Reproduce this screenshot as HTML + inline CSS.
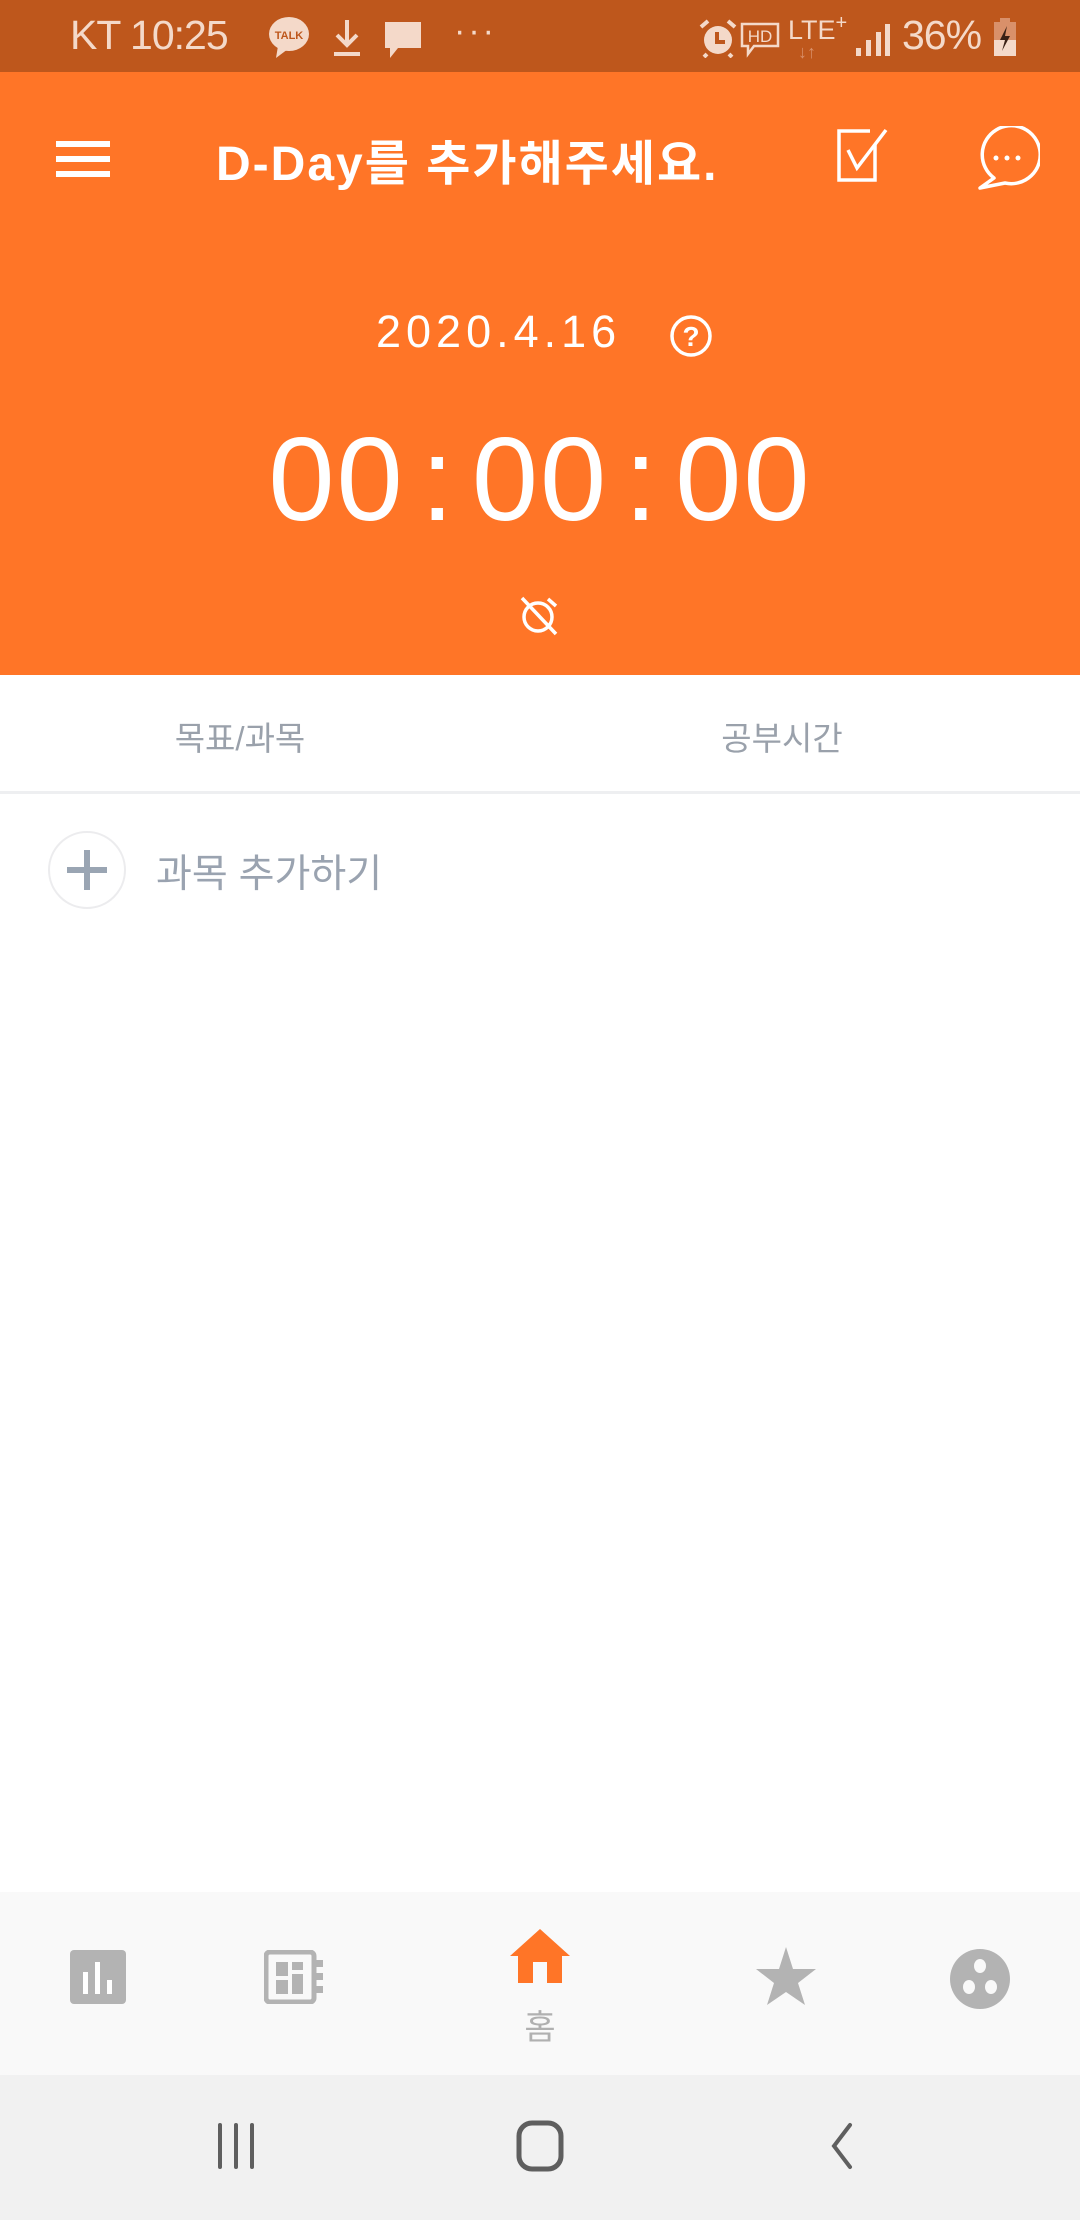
<!DOCTYPE html>
<html><head><meta charset="utf-8"><style>
*{margin:0;padding:0;box-sizing:border-box}
body{width:1080px;height:2220px;position:relative;background:#fff;font-family:"Liberation Sans","Noto Sans CJK KR",sans-serif;overflow:hidden}
.a{position:absolute}
.c{display:inline-block;margin:0 16px}
</style></head><body>
<div class="a" style="left:0;top:0;width:1080px;height:72px;background:#BE571C"></div>
<div class="a" style="left:70px;top:12px;font-size:41px;color:#f4d9c9;letter-spacing:-1px">KT 10:25</div>
<svg class="a" style="left:268px;top:16px" width="44" height="44" viewBox="0 0 44 44"><ellipse cx="21" cy="18" rx="20" ry="17" fill="#f4d9c9"/><path d="M10 30 L8 42 L20 33Z" fill="#f4d9c9"/><text x="21" y="23" font-size="11" font-family="Liberation Sans" font-weight="bold" fill="#BE571C" text-anchor="middle">TALK</text></svg>
<svg class="a" style="left:330px;top:18px" width="34" height="40" viewBox="0 0 34 40"><path d="M17 2 V26 M7 17 L17 27 L27 17 M4 36 H30" stroke="#f4d9c9" stroke-width="4" fill="none"/></svg>
<svg class="a" style="left:382px;top:20px" width="42" height="40" viewBox="0 0 42 40"><path d="M3 2 H39 V28 H16 L8 38 V28 H3Z" fill="#f4d9c9"/></svg>
<div class="a" style="left:454px;top:12px;font-size:34px;color:#f4d9c9;letter-spacing:3px">···</div>
<svg class="a" style="left:698px;top:18px" width="40" height="40" viewBox="0 0 40 40"><circle cx="20" cy="22" r="14" fill="#f4d9c9"/><path d="M3 9 L10 3 M37 9 L30 3 M9 36 L6 39 M31 36 L34 39" stroke="#f4d9c9" stroke-width="4"/><path d="M19 14 V24 H27" stroke="#BE571C" stroke-width="4" fill="none"/></svg>
<svg class="a" style="left:740px;top:22px" width="42" height="36" viewBox="0 0 42 36"><path d="M2 2 H38 V24 H14 L8 32 V24 H2Z" stroke="#f4d9c9" stroke-width="2.5" fill="none"/><text x="20" y="20" font-size="17" font-family="Liberation Sans" fill="#f4d9c9" text-anchor="middle">HD</text></svg>
<div class="a" style="left:788px;top:12px;font-size:27px;color:#f4d9c9">LTE<sup style="font-size:20px">+</sup></div>
<div class="a" style="left:798px;top:42px;font-size:18px;color:#d9906a">↓↑</div>
<svg class="a" style="left:855px;top:22px" width="36" height="34" viewBox="0 0 36 34"><rect x="1" y="26" width="5" height="8" fill="#f4d9c9"/><rect x="11" y="18" width="5" height="16" fill="#f4d9c9"/><rect x="21" y="10" width="5" height="24" fill="#f4d9c9"/><rect x="30" y="2" width="5" height="32" fill="#f4d9c9"/></svg>
<div class="a" style="left:902px;top:12px;font-size:41px;color:#f4d9c9;letter-spacing:-1px">36%</div>
<svg class="a" style="left:994px;top:18px" width="22" height="38" viewBox="0 0 22 38"><rect x="6" y="0" width="10" height="4" fill="#d9906a"/><rect x="0" y="4" width="22" height="34" fill="#d9906a"/><rect x="0" y="22" width="22" height="16" fill="#f4d9c9"/><path d="M13 8 L6 22 H11 L8 33 L16 18 H11Z" fill="#3a2015"/></svg>

<div class="a" style="left:0;top:72px;width:1080px;height:603px;background:#FF7527"></div>
<svg class="a" style="left:56px;top:140px" width="56" height="40" viewBox="0 0 56 40"><path d="M0 4 H54 M0 19 H54 M0 34 H54" stroke="#fff" stroke-width="6"/></svg>
<div class="a" style="left:216px;top:124px;font-size:48px;font-weight:bold;color:#fff;letter-spacing:2px">D-Day를 추가해주세요.</div>
<svg class="a" style="left:836px;top:128px" width="56" height="56" viewBox="0 0 56 56"><path d="M39 16 V52 H3 V3 H34" stroke="#fff" stroke-width="3.5" fill="none"/><path d="M12 22 L21 40 L50 2" stroke="#fff" stroke-width="3.5" fill="none"/></svg>
<svg class="a" style="left:974px;top:126px" width="66" height="66" viewBox="0 0 66 66"><path d="M20 52 A29 29 0 1 1 31 57 L6 62 Z" stroke="#fff" stroke-width="3.5" fill="none" stroke-linejoin="round"/><circle cx="22" cy="32" r="2.5" fill="#fff"/><circle cx="33" cy="32" r="2.5" fill="#fff"/><circle cx="44" cy="32" r="2.5" fill="#fff"/></svg>
<div class="a" style="left:376px;top:306px;font-size:45px;color:#fff;letter-spacing:5px">2020.4.16</div>
<svg class="a" style="left:669px;top:314px" width="44" height="44" viewBox="0 0 44 44"><circle cx="22" cy="22" r="19" stroke="#fff" stroke-width="3.5" fill="none"/><text x="22" y="32" font-size="28" font-family="Liberation Sans" font-weight="bold" fill="#fff" text-anchor="middle">?</text></svg>
<div class="a" style="left:0;top:410px;width:1080px;text-align:center;font-size:119px;color:#fff;letter-spacing:2px;line-height:140px">00<span class="c">:</span>00<span class="c">:</span>00</div>
<svg class="a" style="left:518px;top:594px" width="42" height="42" viewBox="0 0 42 42"><circle cx="20" cy="23" r="14" stroke="#fff" stroke-width="3.5" fill="none"/><path d="M4 4 L38 40 M30 5 L38 12" stroke="#fff" stroke-width="3.5"/></svg>

<div class="a" style="left:0;top:712px;width:480px;text-align:center;font-size:33px;color:#9aa1ab">목표/과목</div>
<div class="a" style="left:540px;top:712px;width:484px;text-align:center;font-size:33px;color:#9aa1ab">공부시간</div>
<div class="a" style="left:0;top:791px;width:1080px;height:3px;background:#eeeff1"></div>
<div class="a" style="left:48px;top:831px;width:78px;height:78px;border-radius:50%;border:2px solid #ececee"></div>
<svg class="a" style="left:65px;top:848px" width="44" height="44" viewBox="0 0 44 44"><path d="M22 2 V42 M2 22 H42" stroke="#9aa5b3" stroke-width="6"/></svg>
<div class="a" style="left:156px;top:843px;font-size:39px;color:#9aa3b0">과목 추가하기</div>

<div class="a" style="left:0;top:1892px;width:1080px;height:183px;background:#f9f9f9"></div>
<svg class="a" style="left:70px;top:1950px" width="56" height="54" viewBox="0 0 56 54"><rect x="0" y="0" width="56" height="54" rx="4" fill="#b3b3b3"/><rect x="13" y="22" width="5" height="22" fill="#fff"/><rect x="25" y="12" width="5" height="32" fill="#fff"/><rect x="37" y="30" width="5" height="14" fill="#fff"/></svg>
<svg class="a" style="left:264px;top:1950px" width="62" height="54" viewBox="0 0 62 54"><rect x="2" y="2" width="48" height="50" rx="4" stroke="#b3b3b3" stroke-width="5" fill="none"/><rect x="12" y="12" width="12" height="14" fill="#b3b3b3"/><rect x="12" y="30" width="12" height="14" fill="#b3b3b3"/><rect x="28" y="12" width="11" height="8" fill="#b3b3b3"/><rect x="28" y="24" width="11" height="20" fill="#b3b3b3"/><rect x="52" y="10" width="7" height="7" fill="#b3b3b3"/><rect x="52" y="23" width="7" height="7" fill="#b3b3b3"/><rect x="52" y="36" width="7" height="7" fill="#b3b3b3"/></svg>
<svg class="a" style="left:510px;top:1929px" width="60" height="54" viewBox="0 0 60 54"><path d="M30 0 L60 27 H52 V54 H8 V27 H0Z" fill="#FF7527"/><rect x="23" y="33" width="14" height="21" fill="#f9f9f9"/></svg>
<div class="a" style="left:500px;top:2000px;width:80px;text-align:center;font-size:34px;color:#b0b0b0">홈</div>
<svg class="a" style="left:756px;top:1947px" width="60" height="58" viewBox="0 0 60 58"><path d="M30 0 L37 22 L60 22 L42 36 L49 58 L30 45 L11 58 L18 36 L0 22 L23 22Z" fill="#b3b3b3"/></svg>
<svg class="a" style="left:949px;top:1948px" width="62" height="62" viewBox="0 0 62 62"><circle cx="31" cy="31" r="30" fill="#b3b3b3"/><ellipse cx="31" cy="18" rx="6" ry="7" fill="#f9f9f9"/><ellipse cx="20" cy="39" rx="6" ry="7" fill="#f9f9f9"/><ellipse cx="42" cy="39" rx="6" ry="7" fill="#f9f9f9"/></svg>

<div class="a" style="left:0;top:2075px;width:1080px;height:145px;background:#f1f1f1"></div>
<svg class="a" style="left:214px;top:2122px" width="48" height="48" viewBox="0 0 48 48"><path d="M6 3 V45 M22 3 V45 M38 3 V45" stroke="#5f5f5f" stroke-width="4" stroke-linecap="round"/></svg>
<svg class="a" style="left:514px;top:2120px" width="52" height="52" viewBox="0 0 52 52"><rect x="5" y="3" width="42" height="46" rx="13" stroke="#5f5f5f" stroke-width="5" fill="none"/></svg>
<svg class="a" style="left:822px;top:2122px" width="36" height="48" viewBox="0 0 36 48"><path d="M28 3 L12 24 L28 45" stroke="#5f5f5f" stroke-width="4" fill="none" stroke-linecap="round"/></svg>
</body></html>
